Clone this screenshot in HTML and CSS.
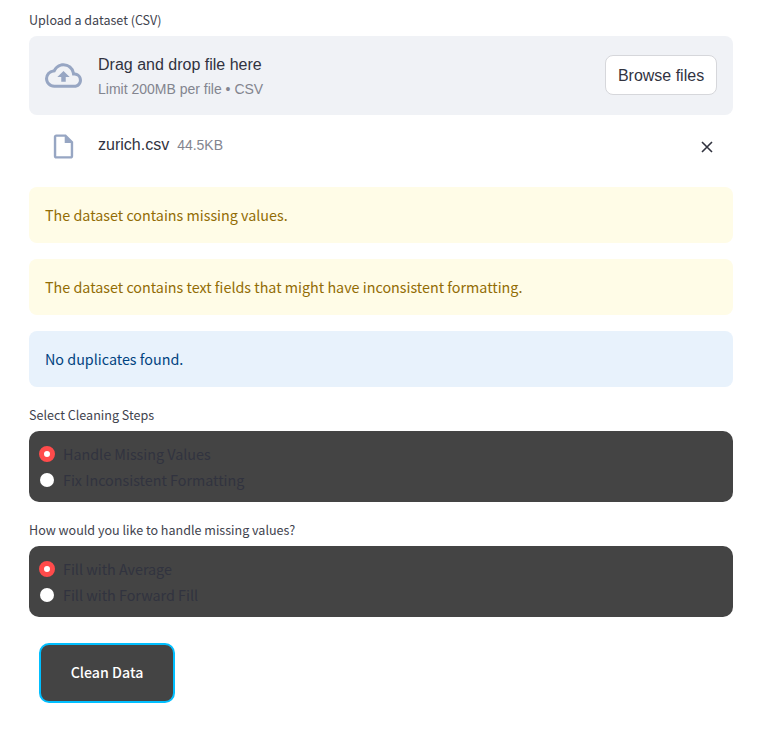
FILE: index.html
```html
<!DOCTYPE html>
<html lang="en">
<head>
<meta charset="utf-8">
<title>Data cleaning</title>
<link rel="stylesheet" href="styles.css">
</head>
<body>
<main class="page">
  <div class="label">Upload a dataset (CSV)</div>
  <section class="dropzone">
    <svg class="cloud" viewBox="0 0 24 24"><path d="M19.35 10.04A7.49 7.49 0 0012 4C9.11 4 6.6 5.64 5.35 8.04A5.994 5.994 0 000 14c0 3.31 2.69 6 6 6h13c2.76 0 5-2.24 5-5 0-2.64-2.05-4.78-4.65-4.96zM19 18H6c-2.21 0-4-1.79-4-4 0-2.05 1.53-3.76 3.56-3.97l1.07-.11.5-.95A5.469 5.469 0 0112 6c2.62 0 4.88 1.86 5.39 4.43l.3 1.5 1.53.11A2.98 2.98 0 0122 15c0 1.65-1.35 3-3 3zM8 13h2.550v3h2.900v-3H16l-4-4z"/></svg>
    <div class="drop-text">
      <div class="drop-title">Drag and drop file here</div>
      <div class="drop-limit">Limit 200MB per file • CSV</div>
    </div>
    <button class="browse">Browse files</button>
  </section>
  <div class="file">
    <svg class="doc" viewBox="0 0 24 24"><path d="M14 2H6c-1.100 0-2 .9-2 2v16c0 1.100.9 2 2 2h12c1.100 0 2-.9 2-2V8l-6-6zM6 20V4h7v5h5v11H6z"/></svg>
    <span class="file-name">zurich.csv</span>
    <span class="file-size">44.5KB</span>
    <svg class="close" viewBox="0 0 12 12"><path d="M1 1l10 10M11 1L1 11"/></svg>
  </div>
  <div class="alert warning">The dataset contains missing values.</div>
  <div class="alert warning">The dataset contains text fields that might have inconsistent formatting.</div>
  <div class="alert info">No duplicates found.</div>
  <div class="label">Select Cleaning Steps</div>
  <div class="radios">
    <div class="option"><span class="dot checked"></span><span class="option-text">Handle Missing Values</span></div>
    <div class="option"><span class="dot"></span><span class="option-text">Fix Inconsistent Formatting</span></div>
  </div>
  <div class="label">How would you like to handle missing values?</div>
  <div class="radios">
    <div class="option"><span class="dot checked"></span><span class="option-text">Fill with Average</span></div>
    <div class="option"><span class="dot"></span><span class="option-text">Fill with Forward Fill</span></div>
  </div>
  <button class="clean">Clean Data</button>
</main>
</body>
</html>
```
FILE: styles.css
```css
* { box-sizing: border-box; }
body {
  margin: 0;
  background: #fff;
  color: #31333f;
  font-family: "Noto Sans CJK SC", sans-serif;
}
.page { width: 704px; margin: 8px 0 0 29px; }
.label { height: 24px; line-height: 24px; font-size: 12.55px; margin-bottom: 4px; color: #41434e; }
.dropzone {
  display: flex;
  align-items: center;
  height: 79px;
  padding: 0 16px;
  border-radius: 8px;
  background: #f0f2f6;
  font-family: "Liberation Sans", sans-serif;
}
.cloud { width: 37px; height: 37px; margin-right: 16px; fill: #97a6c3; }
.drop-text { flex: 1; padding-top: 2px; }
.drop-title { font-size: 16px; line-height: 25px; }
.drop-limit { font-size: 14px; line-height: 25px; color: #83858f; }
.browse {
  width: 112px;
  height: 40px;
  margin-bottom: 2px;
  padding: 2px 0 0;
  border: 1px solid #d6d7db;
  border-radius: 8px;
  background: #fff;
  color: #31333f;
  font: 16px "Liberation Sans", sans-serif;
}
.file {
  display: flex;
  align-items: center;
  height: 60px;
  margin-bottom: 12px;
  padding: 0 20px;
  font-family: "Liberation Sans", sans-serif;
}
.doc { width: 29px; height: 29px; margin-top: 3px; fill: #97a6c3; }
.file-name { margin-left: 20px; font-size: 16px; }
.file-size { margin-left: 8px; font-size: 14px; color: #83858f; }
.close { width: 12px; height: 12px; margin: 3px 0 0 auto; fill: none; stroke: #31333f; stroke-width: 1.6; }
.alert {
  height: 56px;
  margin-bottom: 16px;
  padding: 0 16px;
  border-radius: 8px;
  font-size: 14.34px;
  line-height: 56px;
}
.warning { background: #fffce7; color: #926c05; }
.info { background: #e8f2fc; color: #004280; }
.radios {
  height: 71px;
  margin-bottom: 16px;
  padding: 10px;
  border-radius: 10px;
  background: #444;
}
.option { display: flex; align-items: center; height: 26px; font-size: 14.34px; }
.option-text { line-height: 26px; }
.dot { width: 14px; height: 14px; margin: 0 9px 0 1px; border-radius: 50%; background: #fff; }
.dot.checked { width: 16px; height: 16px; margin: 0 8px 0 0; border: 5px solid #ff4b4b; }
.clean {
  display: block;
  width: 136px;
  height: 60px;
  margin: 26px 0 0 10px;
  padding: 0 0 3px;
  border: 2px solid #00bfff;
  border-radius: 10px;
  background: #444;
  color: #fff;
  font: 500 14.2px "Noto Sans CJK SC", sans-serif;
}
```
